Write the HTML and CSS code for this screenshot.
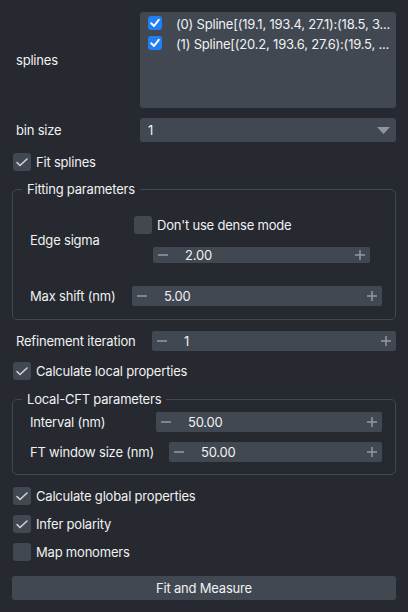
FILE: index.html
```html
<!DOCTYPE html>
<html>
<head>
<meta charset="utf-8">
<link rel="stylesheet" href="styles.css">
</head>
<body>
<div class="panel">
  <div class="row splines-row">
    <div class="label main-label">splines</div>
    <div class="listbox">
      <div class="item">
        <span class="bluecheck"><svg width="14" height="14" viewBox="0 0 14 14"><polyline points="3.2,7.3 6,10 10.8,3.8" fill="none" stroke="#fff" stroke-width="2" stroke-linecap="round" stroke-linejoin="round"/></svg></span>
        <span class="item-text">(0) Spline[(19.1, 193.4, 27.1):(18.5, 3...</span>
      </div>
      <div class="item">
        <span class="bluecheck"><svg width="14" height="14" viewBox="0 0 14 14"><polyline points="3.2,7.3 6,10 10.8,3.8" fill="none" stroke="#fff" stroke-width="2" stroke-linecap="round" stroke-linejoin="round"/></svg></span>
        <span class="item-text">(1) Spline[(20.2, 193.6, 27.6):(19.5, ...</span>
      </div>
    </div>
  </div>

  <div class="row bin-row">
    <div class="label main-label">bin size</div>
    <div class="combo">
      <span class="combo-text">1</span>
      <svg class="combo-arrow" width="13" height="7" viewBox="0 0 13 7"><polygon points="0,0 13,0 6.5,7" fill="#8f959c"/></svg>
    </div>
  </div>

  <div class="check-row fit-row">
    <span class="cbox"><svg width="18" height="18" viewBox="0 0 18 18"><polyline points="4,9.5 7,12.5 14,6" fill="none" stroke="#d1d2d4" stroke-width="1.6" stroke-linecap="round" stroke-linejoin="round"/></svg></span>
    <span class="check-text">Fit splines</span>
  </div>

  <fieldset class="group group-fit">
    <legend>Fitting parameters</legend>
    <div class="group-body fit-body">
      <div class="row edge-row">
        <div class="label sub-label w-fit">Edge sigma</div>
        <div class="edge-field">
          <div class="check-row dense-row">
            <span class="cbox"></span>
            <span class="check-text">Don't use dense mode</span>
          </div>
          <div class="spin edge-spin">
            <svg class="spin-minus" width="10" height="10" viewBox="0 0 10 10"><line x1="0" y1="5" x2="10" y2="5" stroke="#8f959c" stroke-width="1.6"/></svg>
            <span class="spin-value">2.00</span>
            <svg class="spin-plus" width="10" height="10" viewBox="0 0 10 10"><line x1="0" y1="5" x2="10" y2="5" stroke="#8f959c" stroke-width="1.6"/><line x1="5" y1="0" x2="5" y2="10" stroke="#8f959c" stroke-width="1.6"/></svg>
          </div>
        </div>
      </div>
      <div class="row shift-row">
        <div class="label sub-label w-fit">Max shift (nm)</div>
        <div class="spin">
          <svg class="spin-minus" width="10" height="10" viewBox="0 0 10 10"><line x1="0" y1="5" x2="10" y2="5" stroke="#8f959c" stroke-width="1.6"/></svg>
          <span class="spin-value">5.00</span>
          <svg class="spin-plus" width="10" height="10" viewBox="0 0 10 10"><line x1="0" y1="5" x2="10" y2="5" stroke="#8f959c" stroke-width="1.6"/><line x1="5" y1="0" x2="5" y2="10" stroke="#8f959c" stroke-width="1.6"/></svg>
        </div>
      </div>
    </div>
  </fieldset>

  <div class="row refine-row">
    <div class="label main-label w-refine">Refinement iteration</div>
    <div class="spin">
      <svg class="spin-minus" width="10" height="10" viewBox="0 0 10 10"><line x1="0" y1="5" x2="10" y2="5" stroke="#8f959c" stroke-width="1.6"/></svg>
      <span class="spin-value">1</span>
      <svg class="spin-plus" width="10" height="10" viewBox="0 0 10 10"><line x1="0" y1="5" x2="10" y2="5" stroke="#8f959c" stroke-width="1.6"/><line x1="5" y1="0" x2="5" y2="10" stroke="#8f959c" stroke-width="1.6"/></svg>
    </div>
  </div>

  <div class="check-row local-row">
    <span class="cbox"><svg width="18" height="18" viewBox="0 0 18 18"><polyline points="4,9.5 7,12.5 14,6" fill="none" stroke="#d1d2d4" stroke-width="1.6" stroke-linecap="round" stroke-linejoin="round"/></svg></span>
    <span class="check-text">Calculate local properties</span>
  </div>

  <fieldset class="group group-cft">
    <legend>Local-CFT parameters</legend>
    <div class="group-body cft-body">
      <div class="row">
        <div class="label sub-label w-interval">Interval (nm)</div>
        <div class="spin">
          <svg class="spin-minus" width="10" height="10" viewBox="0 0 10 10"><line x1="0" y1="5" x2="10" y2="5" stroke="#8f959c" stroke-width="1.6"/></svg>
          <span class="spin-value">50.00</span>
          <svg class="spin-plus" width="10" height="10" viewBox="0 0 10 10"><line x1="0" y1="5" x2="10" y2="5" stroke="#8f959c" stroke-width="1.6"/><line x1="5" y1="0" x2="5" y2="10" stroke="#8f959c" stroke-width="1.6"/></svg>
        </div>
      </div>
      <div class="row ft-row">
        <div class="label sub-label w-ft">FT window size (nm)</div>
        <div class="spin">
          <svg class="spin-minus" width="10" height="10" viewBox="0 0 10 10"><line x1="0" y1="5" x2="10" y2="5" stroke="#8f959c" stroke-width="1.6"/></svg>
          <span class="spin-value">50.00</span>
          <svg class="spin-plus" width="10" height="10" viewBox="0 0 10 10"><line x1="0" y1="5" x2="10" y2="5" stroke="#8f959c" stroke-width="1.6"/><line x1="5" y1="0" x2="5" y2="10" stroke="#8f959c" stroke-width="1.6"/></svg>
        </div>
      </div>
    </div>
  </fieldset>

  <div class="check-row global-row">
    <span class="cbox"><svg width="18" height="18" viewBox="0 0 18 18"><polyline points="4,9.5 7,12.5 14,6" fill="none" stroke="#d1d2d4" stroke-width="1.6" stroke-linecap="round" stroke-linejoin="round"/></svg></span>
    <span class="check-text">Calculate global properties</span>
  </div>

  <div class="check-row next-row">
    <span class="cbox"><svg width="18" height="18" viewBox="0 0 18 18"><polyline points="4,9.5 7,12.5 14,6" fill="none" stroke="#d1d2d4" stroke-width="1.6" stroke-linecap="round" stroke-linejoin="round"/></svg></span>
    <span class="check-text">Infer polarity</span>
  </div>

  <div class="check-row next-row">
    <span class="cbox"></span>
    <span class="check-text">Map monomers</span>
  </div>

  <button class="action">Fit and Measure</button>
</div>
</body>
</html>
```
FILE: styles.css
```css
* { box-sizing: border-box; }

html, body {
  margin: 0;
  padding: 0;
  background: #262930;
}

body {
  width: 408px;
  height: 612px;
  overflow: hidden;
  font-family: Inter, "Noto Sans", sans-serif;
  font-size: 13px;
  letter-spacing: -0.2px;
  color: #f0f1f2;
}

.panel {
  display: flex;
  flex-direction: column;
  padding: 12px 12px 0 12px;
}

.row {
  display: flex;
  align-items: center;
}

.label {
  flex: none;
  line-height: 16px;
  white-space: nowrap;
}

.main-label {
  width: 128px;
  padding-left: 4px;
}

.w-refine { width: 140px; }
.w-fit { width: 102px; }
.w-interval { width: 126px; }
.w-ft { width: 139px; }

/* list */
.listbox {
  width: 256px;
  height: 96px;
  background: #414851;
  border-radius: 3px;
  padding: 4px 0 0 8px;
}

.item {
  display: flex;
  align-items: center;
  height: 20px;
}

.bluecheck {
  width: 14px;
  height: 14px;
  border-radius: 3px;
  background: #1f7ff3;
  display: flex;
  flex: none;
  margin-top: -6px;
}

.item-text {
  margin-left: 14px;
  margin-top: -5px;
  white-space: nowrap;
  line-height: 16px;
}

/* combo */
.bin-row { margin-top: 10px; }

.combo {
  flex: 1;
  height: 24px;
  background: #414851;
  border-radius: 3px;
  display: flex;
  align-items: center;
  padding: 0 6px 0 8px;
}

.combo-text { flex: 1; }

.combo-arrow { flex: none; }

/* checkboxes */
.check-row {
  display: flex;
  align-items: center;
  height: 18px;
  margin-left: 1px;
}

.cbox {
  width: 18px;
  height: 18px;
  border-radius: 3px;
  background: #414851;
  display: flex;
  flex: none;
}

.check-text {
  margin-left: 5px;
  white-space: nowrap;
}

.fit-row { margin-top: 11px; }
.local-row { margin-top: 11px; }
.global-row { margin-top: 12px; }
.next-row { margin-top: 10px; }

/* group boxes */
.group {
  margin: 0;
  padding: 0;
  border: 1px solid #414851;
  border-radius: 5px;
  min-width: 0;
}

.group legend {
  margin-left: 9px;
  padding: 0 5px;
  line-height: 17px;
}

.group-fit { margin-top: 10px; }
.group-cft { margin-top: 11px; }

.group-body {
  padding: 0 13px 12px 17px;
}

.fit-body { padding-top: 18px; padding-bottom: 13px; }
.cft-body { padding-top: 4px; }

.edge-field {
  flex: 1;
  display: flex;
  flex-direction: column;
}

.dense-row { margin-left: 2px; }

.edge-spin {
  margin: 13px 12px 0 21px;
}

.shift-row { margin-top: 23px; }
.ft-row { margin-top: 10px; }

.refine-row { margin-top: 11px; }

/* spin boxes */
.spin {
  flex: 1;
  height: 20px;
  background: #414851;
  border-radius: 2px;
  display: flex;
  align-items: center;
  padding: 0 5px;
}

.spin-minus { flex: none; }

.spin-value {
  flex: 1;
  margin-left: 17px;
}

.spin-plus { flex: none; }

/* button */
.action {
  margin-top: 15px;
  height: 24px;
  border: none;
  border-radius: 3px;
  background: #414851;
  color: #f0f1f2;
  font-family: Inter, "Noto Sans", sans-serif;
  font-size: 13px;
  letter-spacing: -0.2px;
  padding: 0;
}
```
